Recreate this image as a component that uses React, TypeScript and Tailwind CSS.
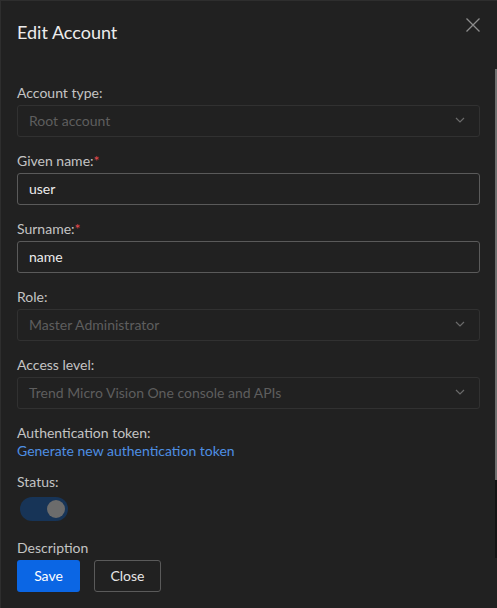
import React from "react";

const font = { fontFamily: '"Segoe UI", Lato, "Noto Sans", sans-serif' };

function Chevron() {
  return (
    <svg width="10" height="6" viewBox="0 0 10 6" fill="none" className="shrink-0">
      <path d="M1 1l4 4 4-4" stroke="#6a6a6a" strokeWidth="1.2" />
    </svg>
  );
}

function Label({ text, required }: { text: string; required?: boolean }) {
  return (
    <div className="h-[18px] text-[14px] leading-[18px] text-[#c4c4c4]">
      {text}
      {required && <span className="text-[#e5484d]">*</span>}
    </div>
  );
}

function Select({ value }: { value: string }) {
  return (
    <div className="mt-[3px] flex h-[32px] items-center justify-between rounded-[3px] border border-[#313131] pb-[2px] pl-[11px] pr-[14px] text-[14px] text-[#5e5e5e]">
      <span>{value}</span>
      <Chevron />
    </div>
  );
}

function Input({ value }: { value: string }) {
  return (
    <div className="mt-[3px] flex h-[32px] items-center rounded-[3px] border border-[#5a5a5a] pb-[2px] pl-[11px] text-[14px] text-[#ececec]">
      {value}
    </div>
  );
}

export default function App() {
  return (
    <div
      className="flex h-[608px] w-[497px] overflow-hidden border-l border-t border-[#2e2e2e] bg-[#212121]"
      style={font}
    >
      <div className="flex min-w-0 flex-1 flex-col pl-[16px] pr-[14px]">
        <div className="flex h-[62px] items-start justify-between">
          <div className="mt-[19px] text-[18px] leading-[24px] text-[#ececec]">Edit Account</div>
          <svg width="16" height="16" viewBox="0 0 16 16" className="mr-[-1px] mt-[16px]" fill="none">
            <path d="M1.5 1.5l13 13M14.5 1.5l-13 13" stroke="#8c8c8c" strokeWidth="1.3" />
          </svg>
        </div>
        <div className="mt-[21px] flex flex-col gap-[15px]">
          <div>
            <Label text="Account type:" />
            <Select value="Root account" />
          </div>
          <div>
            <Label text="Given name:" required />
            <Input value="user" />
          </div>
          <div>
            <Label text="Surname:" required />
            <Input value="name" />
          </div>
          <div>
            <Label text="Role:" />
            <Select value="Master Administrator" />
          </div>
          <div>
            <Label text="Access level:" />
            <Select value="Trend Micro Vision One console and APIs" />
          </div>
          <div>
            <Label text="Authentication token:" />
            <div className="text-[14px] leading-[17px] text-[#4e8fe3]">Generate new authentication token</div>
          </div>
          <div className="mt-[-1px]">
            <Label text="Status:" />
            <div className="ml-[3px] mt-[6px] flex h-[24px] w-[48px] items-center justify-end rounded-full bg-[#173457] pr-[3px]">
              <div className="h-[18px] w-[18px] rounded-full bg-[#6c6c6c]" />
            </div>
          </div>
          <div className="mt-[3px]">
            <Label text="Description" />
            <div className="mt-[3px] flex gap-[14px]">
              <div className="flex h-[32px] w-[63px] items-center justify-center rounded-[3px] bg-[#0b66e4] pb-[2px] text-[14px] text-white">
                Save
              </div>
              <div className="flex h-[32px] w-[67px] items-center justify-center rounded-[3px] border border-[#5a5a5a] pb-[2px] text-[14px] text-[#e6e6e6]">
                Close
              </div>
            </div>
          </div>
        </div>
      </div>
      <div className="flex w-[3px] flex-col pt-[68px]">
        <div className="ml-[1px] h-[411px] w-[2px] bg-[#707070]" />
        <div className="ml-[1px] h-[78px] w-[2px] bg-[#141414]" />
      </div>
    </div>
  );
}
